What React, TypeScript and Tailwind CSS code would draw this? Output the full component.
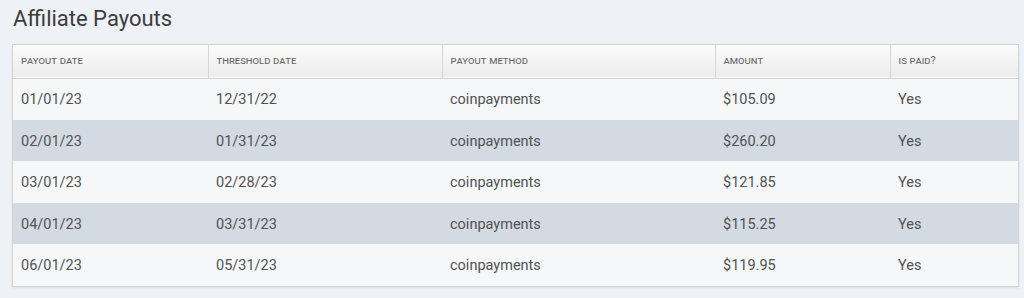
const payouts = [
  { payoutDate: "01/01/23", thresholdDate: "12/31/22", method: "coinpayments", amount: "$105.09", paid: "Yes" },
  { payoutDate: "02/01/23", thresholdDate: "01/31/23", method: "coinpayments", amount: "$260.20", paid: "Yes" },
  { payoutDate: "03/01/23", thresholdDate: "02/28/23", method: "coinpayments", amount: "$121.85", paid: "Yes" },
  { payoutDate: "04/01/23", thresholdDate: "03/31/23", method: "coinpayments", amount: "$115.25", paid: "Yes" },
  { payoutDate: "06/01/23", thresholdDate: "05/31/23", method: "coinpayments", amount: "$119.95", paid: "Yes" },
];

const columns = [
  { label: "payout date", width: "w-[195px]" },
  { label: "threshold date", width: "w-[234px]" },
  { label: "payout method", width: "w-[273px]" },
  { label: "amount", width: "w-[175px]" },
  { label: "is paid?", width: "" },
];

export default function App() {
  return (
    <div className="min-h-[298px] bg-[#eef1f5] px-[12px] pt-[5px] pb-[10px] font-['Roboto',sans-serif]">
      {/* Title */}
      <h1 className="text-[22px] leading-[28px] text-[#3d3d3d] pl-[1px]">Affiliate Payouts</h1>

      {/* Table */}
      <div className="mt-[11px] w-[1007px] border border-[#d3d3d3] shadow-[0_1px_2px_rgba(0,0,0,0.08)]">
        <table className="w-full border-collapse table-fixed">
          <thead>
            <tr className="h-[33px] bg-gradient-to-b from-[#fbfbfb] to-[#ececec] border-b border-[#d3d3d3]">
              {columns.map((col, i) => (
                <th
                  key={col.label}
                  className={`${col.width} px-[8px] text-left font-normal text-[11px] text-[#666] [font-variant:small-caps] ${
                    i < columns.length - 1 ? "border-r border-[#d6d6d6]" : ""
                  }`}
                >
                  {col.label}
                </th>
              ))}
            </tr>
          </thead>
          <tbody>
            {payouts.map((row, i) => (
              <tr
                key={row.payoutDate}
                className={`h-[41.6px] text-[14.5px] text-[#525252] ${i % 2 === 1 ? "bg-[#d3dae2]" : "bg-[#f6f7f9]"}`}
              >
                <td className="px-[8px] pt-[2px]">{row.payoutDate}</td>
                <td className="px-[8px] pt-[2px]">{row.thresholdDate}</td>
                <td className="px-[8px] pt-[2px]">{row.method}</td>
                <td className="px-[8px] pt-[2px]">{row.amount}</td>
                <td className="px-[8px] pt-[2px]">{row.paid}</td>
              </tr>
            ))}
          </tbody>
        </table>
      </div>
    </div>
  );
}
